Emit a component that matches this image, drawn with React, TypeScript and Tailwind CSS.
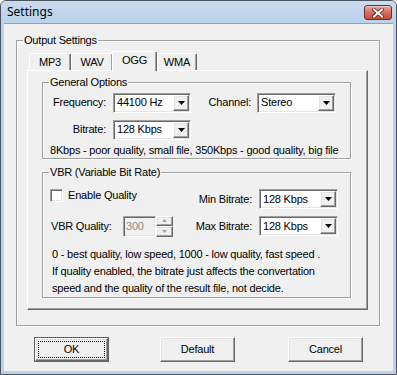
import React from "react";

const sunken =
  "border border-t-[#a0a0a0] border-l-[#a0a0a0] border-r-white border-b-white shadow-[inset_1px_1px_0_#696969,inset_-1px_-1px_0_#e3e3e3]";
const raised =
  "border border-t-white border-l-white border-r-[#696969] border-b-[#696969] shadow-[inset_-1px_-1px_0_#a0a0a0,inset_1px_1px_0_#e3e3e3]";
const etched = "border border-[#a0a0a0] shadow-[inset_1px_1px_0_#fff,1px_1px_0_#fff]";

function Arrow() {
  return (
    <svg width="7" height="4" viewBox="0 0 7 4">
      <path d="M0 0h7L3.5 4z" fill="#000" />
    </svg>
  );
}

function Combo({ className, text }: { className: string; text: string }) {
  return (
    <div className={`h-[20px] bg-white ${sunken} ${className} flex p-[1px]`}>
      <div className="flex-1 flex items-center pl-[2px] leading-[13px]">{text}</div>
      <div className={`w-[16px] h-[16px] bg-[#f0f0f0] ${raised} flex items-center justify-center`}>
        <Arrow />
      </div>
    </div>
  );
}

function Group({
  label,
  className,
  children,
}: {
  label: string;
  className: string;
  children?: React.ReactNode;
}) {
  return (
    <div className={`relative ${etched} ${className}`}>
      <div className="absolute -top-[7px] left-[6px] bg-[#f0f0f0] px-[1px] leading-[13px]">{label}</div>
      {children}
    </div>
  );
}

function Tab({ label, selected, className }: { label: string; selected?: boolean; className?: string }) {
  return (
    <div
      className={`${
        selected ? "h-[20px] -mb-[1px] relative z-10" : "h-[17px]"
      } bg-[#f0f0f0] border-t border-l border-r border-t-white border-l-white border-r-[#696969] shadow-[inset_-1px_0_0_#a0a0a0] rounded-t-[2px] flex justify-center ${
        selected ? "pt-[2px]" : "pt-[2px]"
      } leading-[13px] ${className ?? ""}`}
    >
      {label}
    </div>
  );
}

function Button({ label, isDefault }: { label: string; isDefault?: boolean }) {
  if (isDefault) {
    return (
      <div className="w-[75px] h-[25px] border border-[#646464] p-0">
        <div className={`w-full h-full ${raised} flex items-center justify-center p-[2px]`}>
          <div className="w-full h-full border border-dotted border-black flex items-center justify-center leading-[13px]">
            {label}
          </div>
        </div>
      </div>
    );
  }
  return (
    <div className={`w-[75px] h-[25px] ${raised} flex items-center justify-center leading-[13px]`}>{label}</div>
  );
}

export default function App() {
  return (
    <div className="w-[397px] h-[375px] flex flex-col bg-[#b9d1ea] border border-[#4d5560] rounded-t-[6px] px-[3px] pb-[3px] overflow-hidden text-[11px] tracking-[-0.2px] text-black font-['Liberation_Sans',Arial,sans-serif]">
      {/* title bar */}
      <div className="h-[22px] flex items-start shrink-0 bg-gradient-to-b from-[#c9dbef] to-[#b9d1ea] -mx-[3px] px-[3px]">
        <div className="pl-[3px] pt-[4px] text-[12px] leading-[14px] tracking-normal font-['Noto_Sans',sans-serif] flex-1">Settings</div>
        <div className="mt-[4px] mr-[1px] w-[28px] h-[15px] rounded-[3px] border border-[#6f2d26] bg-gradient-to-b from-[#e8a99c] via-[#d46f63] to-[#c5493b] flex items-center justify-center shadow-[inset_0_1px_0_#f3c8bf]">
          <svg width="12" height="10" viewBox="0 0 12 10">
            <path d="M2 1.5L10 8.5M10 1.5L2 8.5" stroke="#5a231d" strokeWidth="3.6" strokeLinecap="square" />
            <path d="M2 1.5L10 8.5M10 1.5L2 8.5" stroke="#fff" strokeWidth="2" strokeLinecap="square" />
          </svg>
        </div>
      </div>
      {/* client */}
      <div className="flex-1 bg-[#f0f0f0] border-t border-[#8da2b8] flex flex-col">
        <Group label="Output Settings" className="ml-[12px] mt-[16px] w-[364px] h-[286px]">
          <div className="ml-[10px] mt-[10px] flex flex-col">
            {/* tabs */}
            <div className="h-[19px] flex items-end">
              <Tab label="MP3" className="ml-[2px] w-[42px]" />
              <Tab label="WAV" className="w-[42px]" />
              <Tab label="OGG" selected className="-ml-[1px] w-[45px]" />
              <Tab label="WMA" className="w-[40px]" />
            </div>
            {/* panel */}
            <div className="w-[341px] h-[240px] border border-t-white border-l-white border-r-[#696969] border-b-[#696969] shadow-[inset_-1px_-1px_0_#a0a0a0] flex flex-col">
              <Group label="General Options" className="ml-[14px] mt-[11px] w-[309px] h-[77px]">
                <div className="mt-[9px] flex items-center h-[21px]">
                  <div className="w-[63px] text-right leading-[13px]">Frequency:</div>
                  <Combo className="ml-[7px] w-[78px]" text="44100 Hz" />
                  <div className="w-[60px] text-right leading-[13px]">Channel:</div>
                  <Combo className="ml-[6px] w-[79px]" text="Stereo" />
                </div>
                <div className="mt-[6px] flex items-center h-[21px]">
                  <div className="w-[63px] text-right leading-[13px]">Bitrate:</div>
                  <Combo className="ml-[7px] w-[78px]" text="128 Kbps" />
                </div>
                <div className="mt-[4px] pl-[7px] leading-[13px] whitespace-nowrap">
                  8Kbps - poor quality, small file, 350Kbps - good quality, big file
                </div>
              </Group>
              <Group label="VBR (Variable Bit Rate)" className="ml-[14px] mt-[13px] w-[309px] h-[126px]">
                <div className="mt-[16px] flex items-center h-[20px]">
                  <div className="w-[150px] flex items-center self-start">
                    <div className={`ml-[7px] w-[13px] h-[13px] bg-white ${sunken}`} />
                    <div className="ml-[5px] leading-[13px]">Enable Quality</div>
                  </div>
                  <div className="w-[59px] text-right leading-[13px]">Min Bitrate:</div>
                  <Combo className="ml-[7px] w-[79px]" text="128 Kbps" />
                </div>
                <div className="mt-[7px] flex items-center h-[20px]">
                  <div className="w-[80px] pl-[8px] leading-[13px]">VBR Quality:</div>
                  <div className={`w-[33px] h-[21px] bg-[#f0f0f0] ${sunken} flex items-center pl-[2px] text-[#8d8d8d] leading-[13px]`}>
                    300
                  </div>
                  <div className="w-[17px] h-[21px] flex flex-col">
                    <div className={`h-[10px] ${raised} flex items-center justify-center`}>
                      <svg width="5" height="3" viewBox="0 0 5 3">
                        <path d="M0 3h5L2.5 0z" fill="#a0a0a0" />
                      </svg>
                    </div>
                    <div className={`h-[11px] ${raised} flex items-center justify-center`}>
                      <svg width="5" height="3" viewBox="0 0 5 3">
                        <path d="M0 0h5L2.5 3z" fill="#a0a0a0" />
                      </svg>
                    </div>
                  </div>
                  <div className="w-[20px]" />
                  <div className="w-[59px] text-right leading-[13px]">Max Bitrate:</div>
                  <Combo className="ml-[7px] w-[79px]" text="128 Kbps" />
                </div>
                <div className="mt-[10px] pl-[9px] leading-[17px] whitespace-nowrap">
                  <div>0 - best quality, low speed, 1000 - low quality, fast speed .</div>
                  <div>If quality enabled, the bitrate just affects the convertation</div>
                  <div>speed and the quality of the result file, not decide.</div>
                </div>
              </Group>
            </div>
          </div>
        </Group>
        <div className="mt-[11px] flex">
          <div className="ml-[30px]">
            <Button label="OK" isDefault />
          </div>
          <div className="ml-[51px]">
            <Button label="Default" />
          </div>
          <div className="ml-[53px]">
            <Button label="Cancel" />
          </div>
        </div>
      </div>
    </div>
  );
}
